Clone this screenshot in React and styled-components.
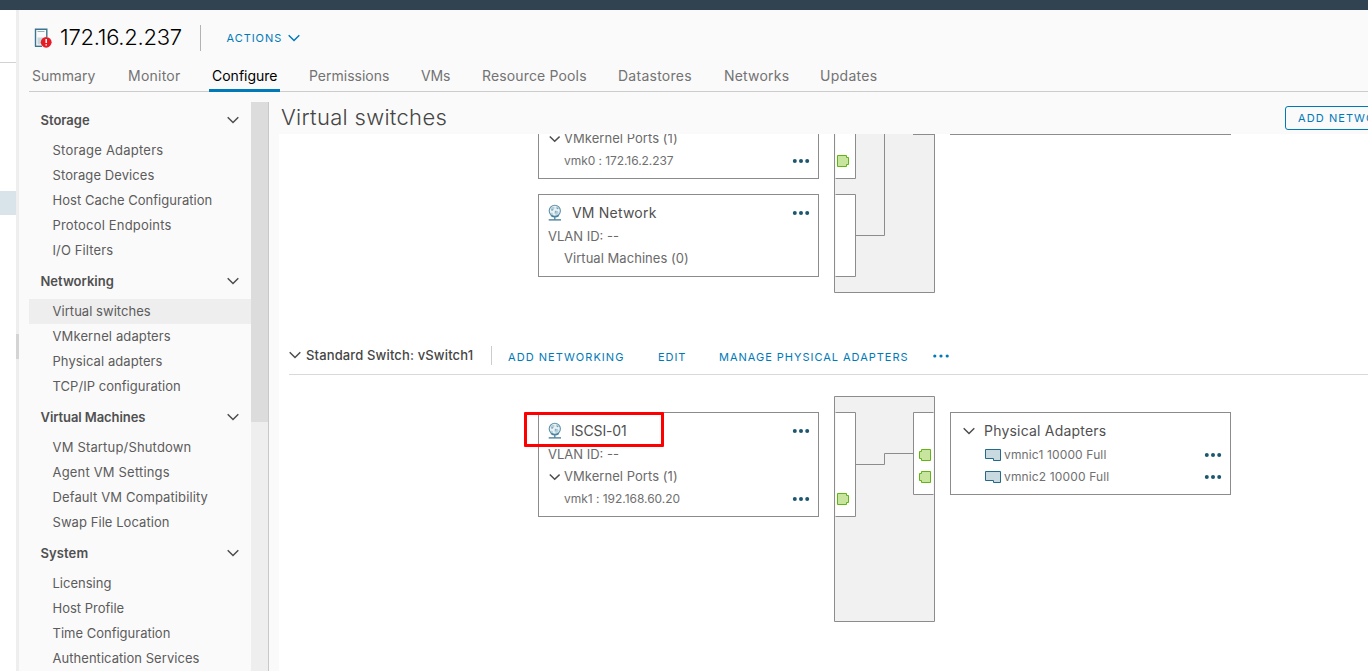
import React from 'react';
import styled, { createGlobalStyle, css } from 'styled-components';

const GlobalStyle = createGlobalStyle`
  *, *::before, *::after { box-sizing: border-box; }
  body {
    margin: 0;
    overflow: hidden;
    background: #fff;
    color: #5c5c5c;
    font: 400 13px/22px Inter, "Open Sans", sans-serif;
  }
  svg { display: block; flex: none; }
`;

const track = css`letter-spacing: ${(p) => p.$track || 0}px;`;

const Page = styled.div`
  display: flex;
  flex-direction: column;
  width: 100vw;
  height: 100vh;
  overflow: hidden;
`;
const TopBar = styled.div`
  flex: none;
  height: 10px;
  background: #314351;
`;
const Workspace = styled.div`
  flex: 1;
  min-height: 0;
  display: flex;
`;
const Inventory = styled.div`
  flex: none;
  width: 16px;
  background: #fff;
`;
const InventoryHeader = styled.div`
  height: 53px;
  border-bottom: 1px solid #d2d2d2;
`;
const InventorySelected = styled.div`
  height: 24px;
  margin-top: 128px;
  background: #d9e4ea;
`;
const Splitter = styled.div`
  flex: none;
  width: 3px;
  padding-top: 324px;
  background: #eee;
`;
const SplitterHandle = styled.div`
  height: 25px;
  background: #d4d4d4;
`;
const Main = styled.main`
  flex: 1;
  min-width: 0;
  display: flex;
  flex-direction: column;
  padding-left: 10px;
  background: #fafafa;
`;

const ObjectHeader = styled.header`
  flex: none;
  display: flex;
  align-items: center;
  height: 50px;
  padding: 5px 0 0 5px;
`;
const ObjectName = styled.h1`
  width: 141px;
  margin: 0 0 0 7px;
  padding-bottom: 2px;
  font-size: 22px;
  font-weight: 300;
  line-height: 26px;
  color: #000;
  white-space: nowrap;
  ${track}
`;
const HeaderRule = styled.div`
  width: 1px;
  height: 26px;
  margin: 0 25.5px 0 -1px;
  background: #b3b3b3;
`;
const LinkButton = styled.button`
  display: flex;
  align-items: center;
  padding: 0;
  border: 0;
  background: none;
  font: 400 11px/22px Inter, sans-serif;
  color: #0079b8;
  white-space: nowrap;
  ${track}
`;
const ActionsButton = styled(LinkButton)`gap: 6px;`;

const TabBar = styled.nav`
  flex: none;
  display: flex;
  height: 32px;
  border-bottom: 1px solid #ccc;
`;
const Tab = styled.a`
  flex: none;
  width: ${(p) => p.$width}px;
  height: 32px;
  padding-left: 3px;
  margin-right: ${(p) => p.$gap}px;
  font-size: 14px;
  line-height: 31px;
  color: ${(p) => (p.$active ? '#000' : '#737373')};
  box-shadow: ${(p) => (p.$active ? 'inset 0 -3px 0 #0079b8' : 'none')};
  white-space: nowrap;
  ${track}
`;

const Body = styled.div`
  flex: 1;
  min-height: 0;
  display: flex;
`;
const SideNav = styled.aside`
  flex: none;
  width: 222px;
  margin-top: 10px;
  overflow: hidden;
`;
const GroupHeader = styled.div`
  display: flex;
  align-items: center;
  justify-content: space-between;
  height: 36px;
  padding: 0 12px 0 11.5px;
  font-weight: 600;
  color: #505050;
  ${track}
`;
const NavItem = styled.a`
  display: block;
  height: 25px;
  padding-left: 23.5px;
  line-height: 25px;
  white-space: nowrap;
  background: ${(p) => (p.$active ? '#eee' : 'transparent')};
  ${track}
`;
const ScrollTrack = styled.div`
  flex: none;
  width: 18px;
  margin-top: 10px;
  background: #eee;
  border-right: 1px solid #c8c8c8;
`;
const ScrollThumb = styled.div`
  height: 320px;
  background: #dcdcdc;
`;

const Content = styled.section`
  flex: 1;
  min-width: 0;
  display: flex;
  flex-direction: column;
  overflow: hidden;
`;
const ContentHeader = styled.div`
  flex: none;
  display: flex;
  justify-content: space-between;
  height: 42px;
  padding: 12px 0 0 12px;
`;
const ContentTitle = styled.h2`
  margin: 0;
  font-size: 22px;
  font-weight: 300;
  line-height: 26px;
  color: #454545;
  ${track}
`;
const OutlineButton = styled(LinkButton)`
  flex: none;
  width: 143px;
  height: 24px;
  margin: 2px -60px 0 0;
  padding-left: 12px;
  border: 1px solid #0079b8;
  border-radius: 3px;
`;
const Canvas = styled.div`
  flex: 1;
  margin-left: 10px;
  padding-left: 10px;
  background: #fff;
  overflow: hidden;
`;

const SwitchHeader = styled.div`
  display: flex;
  align-items: center;
  height: 39px;
  margin-top: 43px;
  border-bottom: 1px solid #d7dadb;
`;
const SwitchName = styled.div`
  width: 185px;
  margin-left: 5px;
  font-weight: 500;
  color: #454545;
  white-space: nowrap;
  ${track}
`;
const SwitchRule = styled.div`
  width: 1px;
  height: 19px;
  margin-right: 16px;
  background: #ccc;
`;
const SwitchActions = styled.div`
  display: flex;
  align-items: center;
  padding-top: 4px;
`;
const SwitchAction = styled(LinkButton)`width: ${(p) => p.$width}px;`;
const OverflowButton = styled(LinkButton)`padding-bottom: 3px;`;

const Topology = styled.div`
  display: flex;
  align-items: flex-start;
  gap: 15px;
  height: ${(p) => p.$height}px;
  margin-top: ${(p) => p.$offset || 0}px;
  padding-left: 249px;
`;
const CardColumn = styled.div`
  display: flex;
  flex-direction: column;
  gap: 15px;
  padding-top: ${(p) => p.$offset || 0}px;
`;
const Card = styled.div`
  position: relative;
  width: 281px;
  padding: 6px 8px 6px 9px;
  border: 1px solid #8c8c8c;
  background: #fff;
  ${(p) => p.$clipped && css`
    padding-top: 0;
    border-top: 0;
  `}
`;
const CardEdge = styled.div`
  width: 281px;
  height: 1px;
  background: #8c8c8c;
`;
const Label = styled.span`
  flex: 1;
  padding-left: ${(p) => p.$gap || 0}px;
  white-space: nowrap;
  ${track}
`;
const CardTitle = styled.div`
  display: flex;
  align-items: center;
  height: 25px;
  padding: 0 0 2px ${(p) => p.$indent || 0}px;
  font-size: 14px;
  color: #505050;
`;
const CardRow = styled.div`
  display: flex;
  align-items: center;
  height: 22px;
  margin-top: ${(p) => (p.$first ? -6 : 0)}px;
  padding-left: ${(p) => p.$indent || 0}px;
  font-size: ${(p) => (p.$small ? 12 : 13)}px;
  color: ${(p) => (p.$small ? '#707070' : '#6a6a6a')};

  ${Label} { padding-bottom: ${(p) => (p.$small ? 0 : 2)}px; }
`;
const Highlight = styled.div`
  position: absolute;
  top: -1px;
  left: -15px;
  width: 140px;
  height: 35px;
  border: 3px solid #fe0000;
  border-radius: 1px;
`;

function Chevron({ color = '#4d4d4d' }) {
  return (
    <svg width="12" height="8" viewBox="0 0 12 8" fill="none" stroke={color} strokeWidth="1.5">
      <path d="M.7 1.2 6 6.5l5.3-5.3" />
    </svg>
  );
}

function SmallChevron() {
  return (
    <svg width="12" height="8" viewBox="0 0 12 8" fill="none" stroke="#4d4d4d" strokeWidth="1.5">
      <path d="m1.8 1.5 4.9 4.7 4.900-4.700" />
    </svg>
  );
}

function Dots({ color = '#1d566f', r = 2 }) {
  return (
    <svg width="18" height="6" viewBox="0 0 18 6" fill={color}>
      <circle cx="2.8" cy="3" r={r} />
      <circle cx="9" cy="3" r={r} />
      <circle cx="15.2" cy="3" r={r} />
    </svg>
  );
}

function HostIcon() {
  return (
    <svg width="19" height="20" viewBox="0 0 19 20">
      <path d="M1.5 1v17.5M.8 1.2h12.7M12.8.5V9" fill="none" stroke="#3b768e" strokeWidth="1.4" />
      <path d="M1 18.3h7" stroke="#3b768e" strokeWidth="1.4" />
      <path d="M3.5 3.5h7" stroke="#8fb3c2" />
      <path d="M3.5 9.5h7v7h-7z" fill="#c5d8e0" />
      <circle cx="12.2" cy="14.3" r="5.4" fill="#e51c23" />
      <path d="M12.2 11v4M12.2 16.2v1.4" stroke="#fff" strokeWidth="1.5" />
    </svg>
  );
}

function GlobeIcon() {
  return (
    <svg width="14" height="17" viewBox="-.5 -.5 14 17">
      <circle cx="6.3" cy="6.3" r="5.6" fill="#e9f2f5" stroke="#5f91aa" strokeWidth="1.1" />
      <path d="M2 3.6 4.4 2l1.8 1-1 2.4-2.4 1zM7.6 1.6l2.6 1.6-1 1.8-2-1zM6.4 6l3 .6.8 1.8-2.6 2.4-1.8-2zM2.2 8l2 .6.4 2-1.6-.6z" fill="#b4cfda" />
      <path d="M3 5.4h1.4M8.6 3.8h1.3M6.6 7.4h1.2" stroke="#5a8ea8" />
      <path d="M2.4 11c2.4 1.7 5.6 1.7 8 0M6.3 12v3" fill="none" stroke="#4a819c" strokeWidth="1.3" />
      <path d="M.2 15.4h12.3" stroke="#2f6f8f" strokeWidth="1.2" />
    </svg>
  );
}

function NicIcon() {
  return (
    <svg width="17" height="12" viewBox="0 0 17 12">
      <path d="M.5.5h15v11H8.5v-2h-8z" fill="#c9d9e0" stroke="#236a8a" />
    </svg>
  );
}

function Port({ x, y, flip }) {
  return (
    <path
      transform={flip ? `translate(${x + 12} ${y}) scale(-1 1)` : `translate(${x} ${y})`}
      d="M.5.5h9v2h2v7h-2v2h-9z"
      fill="#c7e59c"
      stroke="#60b515"
    />
  );
}

function ManagementBackplane() {
  return (
    <svg width="101" height="159" viewBox="0 0 101 159" fill="none" stroke="#8c8c8c">
      <path d="M.5 0v158.5h100V0" fill="#f1f1f1" />
      <path d="M1.5 0h20v44.5h-20zM1.5 60.5h20v82h-20z" fill="#fff" stroke="none" />
      <path d="M21.5 0v44.5h-20M1.5 60.5h20v82h-20M21.5 101.5h29V0M79 .5h21" />
      <Port x={3} y={21} />
    </svg>
  );
}

function IscsiBackplane() {
  return (
    <svg width="101" height="226" viewBox="0 0 101 226" fill="none" stroke="#8c8c8c">
      <path d="M.5.5h100v225H.5z" fill="#f1f1f1" />
      <path d="M1.5 16.5h20v104h-20zM79.5 16.5h20v82h-20z" fill="#fff" stroke="none" />
      <path d="M1.5 16.5h20v104h-20M99.5 16.5h-20v82h20M21.5 68.5h29v-11h29" />
      <Port x={3} y={97} />
      <Port x={85} y={53} flip />
      <Port x={85} y={75} flip />
    </svg>
  );
}

const TABS = [
  ['Summary', 70, 26, 0.05],
  ['Monitor', 58, 26, 0.24],
  ['Configure', 71, 26, 0],
  ['Permissions', 86, 26, 0],
  ['VMs', 36, 25, -0.15],
  ['Resource Pools', 110, 26, 0.15],
  ['Datastores', 80, 26, 0.26],
  ['Networks', 71, 25, 0.2],
  ['Updates', 64, 0, 0.3],
];

const NAV = [
  { title: 'Storage', track: 0, items: [['Storage Adapters', 0.22], ['Storage Devices', 0.08], ['Host Cache Configuration', 0.03], ['Protocol Endpoints', 0.18], ['I/O Filters', 0.12]] },
  { title: 'Networking', track: 0, items: [['Virtual switches', 0.04], ['VMkernel adapters', 0.12], ['Physical adapters', 0.07], ['TCP/IP configuration', 0.04]] },
  { title: 'Virtual Machines', track: -0.08, items: [['VM Startup/Shutdown', 0.17], ['Agent VM Settings', 0.18], ['Default VM Compatibility', 0.11], ['Swap File Location', 0.06]] },
  { title: 'System', track: 0.1, items: [['Licensing', 0], ['Host Profile', 0], ['Time Configuration', 0], ['Authentication Services', 0.04]] },
];

const ADAPTERS = ['vmnic1 10000 Full', 'vmnic2 10000 Full'];

export default function App() {
  return (
    <Page>
      <GlobalStyle />
      <TopBar />
      <Workspace>
        <Inventory>
          <InventoryHeader />
          <InventorySelected />
        </Inventory>
        <Splitter><SplitterHandle /></Splitter>
        <Main>
          <ObjectHeader>
            <HostIcon />
            <ObjectName $track={-0.26}>172.16.2.237</ObjectName>
            <HeaderRule />
            <ActionsButton $track={0.95}>ACTIONS <Chevron color="#0079b8" /></ActionsButton>
          </ObjectHeader>
          <TabBar>
            {TABS.map(([name, width, gap, spacing]) => (
              <Tab key={name} $width={width} $gap={gap} $track={spacing} $active={name === 'Configure'}>{name}</Tab>
            ))}
          </TabBar>
          <Body>
            <SideNav>
              {NAV.map((group) => (
                <div key={group.title}>
                  <GroupHeader $track={group.track}>{group.title}<Chevron /></GroupHeader>
                  {group.items.map(([name, spacing]) => (
                    <NavItem key={name} $track={spacing} $active={name === 'Virtual switches'}>{name}</NavItem>
                  ))}
                </div>
              ))}
            </SideNav>
            <ScrollTrack><ScrollThumb /></ScrollTrack>
            <Content>
              <ContentHeader>
                <ContentTitle $track={0.3}>Virtual switches</ContentTitle>
                <OutlineButton $track={1.08}>ADD NETWORKING</OutlineButton>
              </ContentHeader>
              <Canvas>
                <Topology $height={159}>
                  <CardColumn>
                    <Card $clipped>
                      <CardRow $first>
                        <SmallChevron />
                        <Label $gap={4} $track={0.05}>VMkernel Ports (1)</Label>
                      </CardRow>
                      <CardRow $small $indent={16}>
                        <Label $track={-0.06}>vmk0 : 172.16.2.237</Label>
                        <Dots />
                      </CardRow>
                    </Card>
                    <Card>
                      <CardTitle>
                        <GlobeIcon />
                        <Label $gap={10} $track={0.2}>VM Network</Label>
                        <Dots />
                      </CardTitle>
                      <CardRow><Label>VLAN ID: --</Label></CardRow>
                      <CardRow $indent={16}><Label $track={0.04}>Virtual Machines (0)</Label></CardRow>
                    </Card>
                  </CardColumn>
                  <ManagementBackplane />
                  <CardEdge />
                </Topology>
                <SwitchHeader>
                  <Chevron />
                  <SwitchName $track={0.14}>Standard Switch: vSwitch1</SwitchName>
                  <SwitchRule />
                  <SwitchActions>
                    <SwitchAction $width={150} $track={1.05}>ADD NETWORKING</SwitchAction>
                    <SwitchAction $width={61} $track={0.95}>EDIT</SwitchAction>
                    <SwitchAction $width={213} $track={0.98}>MANAGE PHYSICAL ADAPTERS</SwitchAction>
                    <OverflowButton><Dots color="#0079b8" r={1.6} /></OverflowButton>
                  </SwitchActions>
                </SwitchHeader>
                <Topology $height={226} $offset={21}>
                  <CardColumn $offset={16}>
                    <Card>
                      <CardTitle>
                        <GlobeIcon />
                        <Label $gap={9} $track={-0.14}>ISCSI-01</Label>
                        <Dots />
                      </CardTitle>
                      <CardRow><Label>VLAN ID: --</Label></CardRow>
                      <CardRow>
                        <SmallChevron />
                        <Label $gap={4} $track={0.05}>VMkernel Ports (1)</Label>
                      </CardRow>
                      <CardRow $small $indent={16}>
                        <Label $track={-0.03}>vmk1 : 192.168.60.20</Label>
                        <Dots />
                      </CardRow>
                      <Highlight />
                    </Card>
                  </CardColumn>
                  <IscsiBackplane />
                  <CardColumn $offset={16}>
                    <Card>
                      <CardTitle $indent={3}>
                        <Chevron />
                        <Label $gap={9} $track={0.2}>Physical Adapters</Label>
                      </CardTitle>
                      {ADAPTERS.map((name) => (
                        <CardRow key={name} $small $indent={25}>
                          <NicIcon />
                          <Label $gap={2} $track={0.14}>{name}</Label>
                          <Dots />
                        </CardRow>
                      ))}
                    </Card>
                  </CardColumn>
                </Topology>
              </Canvas>
            </Content>
          </Body>
        </Main>
      </Workspace>
    </Page>
  );
}
